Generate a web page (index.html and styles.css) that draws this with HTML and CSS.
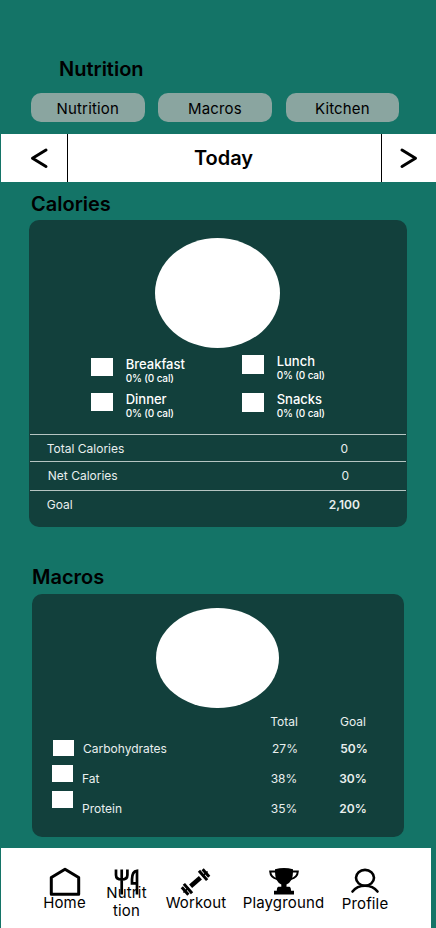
FILE: index.html
```html
<!DOCTYPE html>
<html lang="en">
<head>
<meta charset="utf-8">
<title>Nutrition</title>
<link rel="stylesheet" href="styles.css">
</head>
<body>
<div class="app">
  <h1 class="title">Nutrition</h1>
  <div class="tabs">
    <button class="tab">Nutrition</button>
    <button class="tab">Macros</button>
    <button class="tab">Kitchen</button>
  </div>
  <div class="datebar">
    <div class="prev"><svg width="20" height="22" viewBox="0 0 20 22"><path d="M16 3 2.500 11.300 16 19.500"/></svg></div>
    <div class="today">Today</div>
    <div class="next"><svg width="20" height="22" viewBox="0 0 20 22"><path d="M3 3l13.500 8.300L3 19.500"/></svg></div>
  </div>

  <h2 class="heading">Calories</h2>
  <section class="card calories">
    <div class="chart"></div>
    <div class="legend">
      <div class="meals">
        <div class="meal first"><i class="swatch"></i><div><b>Breakfast</b><small>0% (0 cal)</small></div></div>
        <div class="meal"><i class="swatch"></i><div><b>Dinner</b><small>0% (0 cal)</small></div></div>
      </div>
      <div class="meals raised">
        <div class="meal first"><i class="swatch"></i><div><b>Lunch</b><small>0% (0 cal)</small></div></div>
        <div class="meal"><i class="swatch"></i><div><b>Snacks</b><small>0% (0 cal)</small></div></div>
      </div>
    </div>
    <div class="sum total"><span>Total Calories</span><span class="value">0</span></div>
    <div class="sum net"><span>Net Calories</span><span class="value">0</span></div>
    <div class="sum goal"><span>Goal</span><span class="value strong">2,100</span></div>
  </section>

  <h2 class="heading macros-heading">Macros</h2>
  <section class="card macros">
    <div class="chart small"></div>
    <div class="table">
      <div class="swatches"><i class="swatch"></i><i class="swatch"></i><i class="swatch"></i></div>
      <div class="col names"><span></span><span class="lead">Carbohydrates</span><span>Fat</span><span>Protein</span></div>
      <div class="col totals"><span>Total</span><span class="lead">27%</span><span>38%</span><span>35%</span></div>
      <div class="col goals"><span>Goal</span><span class="lead">50%</span><span>30%</span><span>20%</span></div>
    </div>
  </section>

  <nav class="nav">
    <a class="item home">
      <svg width="32" height="30" viewBox="0 0 32 30"><path class="line" d="M2.300 11.500 16 3.300l13.700 8.200V28.300H2.300z"/></svg>
      <span>Home</span>
    </a>
    <a class="item food">
      <svg width="32" height="30" viewBox="0 0 32 30"><path class="fork" d="M5 3.500v5.500q0 4.500 5.700 4.500t5.700-4.500V3.500M10.700 3.500v25M26 28.500V4.800q-5 .5-5 8.500v4h5"/></svg>
      <span>Nutrit<br>tion</span>
    </a>
    <a class="item workout">
      <svg width="32" height="30" viewBox="0 0 32 30"><g transform="translate(15.500 16) rotate(-41)"><path d="M-6.500-2.300H6.500v4.600H-6.500z"/><path d="M-16-.8H-9v1.600h-7zM9-.8h7v1.600H9z"/><path class="bar" d="M-10-6.200v12.400M-13.800-5v10M10-6.200v12.400M13.800-5v10"/></g></svg>
      <span>Workout</span>
    </a>
    <a class="item play">
      <svg width="32" height="30" viewBox="0 0 32 30"><path d="M7 3.200Q16 1 25 3.200V6q0 9.500-6.500 12.500v2.300h3q1.500.5 1.500 4h3v3.700H6v-3.700h2.800q0-3.500 1.500-4h3v-2.300Q7 15.500 7 6z"/><path class="thin" d="M7.500 5.500H2.200q.3 6 7 7.500M24.500 5.500h5.300q-.3 6-7 7.500"/></svg>
      <span>Playground</span>
    </a>
    <a class="item profile">
      <svg width="32" height="30" viewBox="0 0 32 30"><ellipse class="person" cx="16" cy="11.800" rx="9" ry="7.900"/><path class="person" d="M3.500 25.500Q8 19.800 16 19.800T28.500 25.500"/></svg>
      <span>Profile</span>
    </a>
  </nav>
</div>
</body>
</html>
```
FILE: styles.css
```css
* { box-sizing: border-box; }
body { margin: 0; font-family: Inter, sans-serif; color: #000; }
.app { width: 436px; height: 928px; overflow: hidden; background: #147467; display: flex; flex-direction: column; }
.title { margin: 57px 0 0 59px; height: 24px; font-size: 20px; line-height: 24px; font-weight: 600; }
.tabs { display: flex; gap: 14px; margin: 11.500px 0 0 31px; }
.tab { width: 113.500px; height: 29.500px; padding: 3px 0 0; border: 0; border-radius: 10px; background: #8aa5a0; font: 400 15px/20px Inter, sans-serif; letter-spacing: 0.15px; color: #000; }
.tab + .tab { position: relative; left: -0.4px; }
.datebar { display: flex; height: 48.300px; margin: 12px 0 0 1px; background: #fff; }
.prev { width: 67px; border-right: 1px solid #000; padding: 13px 0 0 29px; }
.today { flex: 1; text-align: center; font-size: 20px; line-height: 48px; font-weight: 600; padding-right: 2px; }
.next { width: 55px; border-left: 1px solid #000; padding: 13px 0 0 17px; }
.datebar svg { display: block; fill: none; stroke: #000; stroke-width: 3; stroke-linecap: round; stroke-linejoin: round; }
.heading { margin: 9.700px 0 0 31px; height: 24px; font-size: 20px; line-height: 24px; font-weight: 600; }
.card { background: #12403c; border-radius: 10px; color: #fff; flex: none; }
.calories { width: 377.500px; height: 306.500px; margin: 4.500px 0 0 29.300px; padding-top: 17.500px; }
.chart { width: 125px; height: 110px; margin-left: 125.700px; background: #fff; border-radius: 50%; }
.legend { display: flex; height: 86px; padding: 8px 0 0 61.700px; }
.meals { width: 151px; }
.meal { display: flex; gap: 13px; height: 35.200px; }
.raised { margin-top: -2.700px; }
.raised .first { height: 38px; }
.swatch { display: block; width: 21.700px; height: 18.300px; margin-top: 2.300px; background: #fff; flex: none; }
.meal b { display: block; font-size: 13px; line-height: 16px; font-weight: 500; }
.meal small { display: block; font-size: 10px; line-height: 13px; font-weight: 500; letter-spacing: -0.15px; }
.sum { display: flex; border-top: 1.500px solid #b5c5c2; margin: 0 1px; padding-left: 16.500px; font-size: 12px; line-height: 28px; height: 28px; color: #e9efee; }
.sum span:first-child { width: 251.500px; }
.value { width: 92px; text-align: center; }
.strong { font-weight: 600; }
.total { height: 27.500px; }
.net { padding-left: 17.500px; height: 28.500px; }
.macros-heading { margin: 38px 0 0 32px; }
.macros { width: 372px; height: 243px; margin: 5px 0 0 32px; padding-top: 14px; }
.small { width: 123px; height: 100.500px; margin-left: 124px; }
.table { display: flex; padding: 5.500px 0 0 20px; font-size: 12px; line-height: 16px; color: #e9efee; }
.swatches { width: 31px; padding-top: 26px; }
.swatches .swatch { width: 21px; height: 16.700px; margin: 0 0 9px; }
.swatches .swatch:first-child { margin-left: 1px; }
.col { display: flex; flex-direction: column; }
.col span { height: 30px; }
.col span:first-child { height: 27.500px; }
.col .lead { position: relative; left: 1px; }
.names { width: 164px; margin-left: -1px; }
.totals { width: 76px; align-items: center; margin-left: 0; }
.goals { width: 62px; align-items: center; }
.goals span:not(:first-child) { font-weight: 600; }
.nav { display: flex; width: 430px; height: 80px; margin: 11.500px 0 0 1px; background: #fff; flex: none; }
.item { display: flex; flex-direction: column; align-items: center; padding-top: 18px; font-size: 15px; line-height: 18px; flex: none; text-align: center; }
.item svg { display: block; flex: none; }
.item span { margin-top: -2px; font-weight: 400; letter-spacing: 0.15px; white-space: nowrap; }
.home { width: 43px; margin-left: 42px; }
.food { width: 41px; margin-left: 20px; }
.food span { margin-top: -12px; }
.workout { width: 60px; margin-left: 19px; }
.play { width: 81px; margin-left: 17px; }
.profile { width: 46px; margin-left: 18px; }
.profile span { margin-top: -1px; }
.line { fill: none; stroke: #000; stroke-width: 3; stroke-linejoin: round; }
.fork { fill: none; stroke: #000; stroke-width: 2.700; }
.bar { fill: none; stroke: #000; stroke-width: 3; }
.thin { fill: none; stroke: #000; stroke-width: 2; }
.person { fill: none; stroke: #000; stroke-width: 2.600; stroke-linecap: round; }
```
